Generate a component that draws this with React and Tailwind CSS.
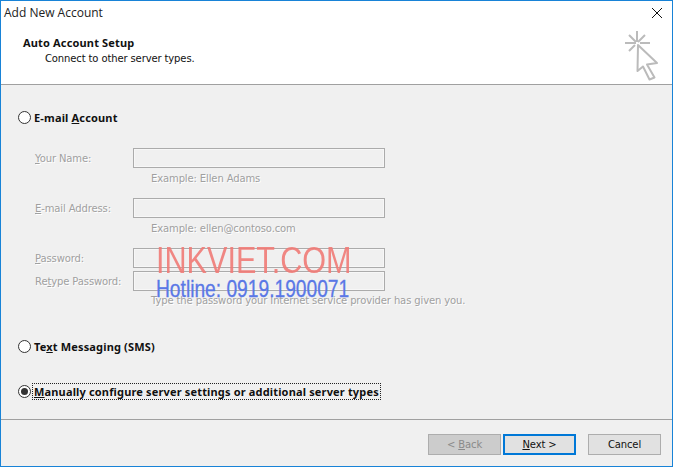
import React from 'react';

const Radio = ({ checked }) => (
  <span className="flex h-[13px] w-[13px] shrink-0 items-center justify-center rounded-full border border-[#333] bg-white">
    {checked && <span className="h-[7px] w-[7px] rounded-full bg-[#333]" />}
  </span>
);

const RadioRow = ({ checked, focused, children }) => (
  <div className="flex h-[15px] items-center pl-[17px]">
    <Radio checked={checked} />
    <span
      className={`ml-[2px] flex h-[15px] items-center pl-px pr-px text-[11px] font-bold leading-none tracking-[0.16px] text-[#111] [font-family:'Noto_Sans',sans-serif] ${
        focused ? 'outline-1 outline-dotted outline-[#222]' : ''
      }`}
    >
      {children}
    </span>
  </div>
);

const Disabled = ({ children, className = '' }) => (
  <span className={`text-[10px] leading-none tracking-[-0.12px] text-[#a0a0a0] [text-shadow:1px_1px_0_#fff] ${className}`}>{children}</span>
);

const Field = ({ label, className = '' }) => (
  <div className={`flex h-5 items-center ${className}`}>
    <Disabled className="mt-[2px] w-[98px] shrink-0">{label}</Disabled>
    <div className="h-5 w-[252px] border border-[#ababab] bg-[#f0f0f0] shadow-[inset_0_0_0_1px_#f7f7f7]" />
  </div>
);

const Hint = ({ children, className = '' }) => (
  <div className={`flex h-[14px] items-center pl-[116px] pt-[2px] ${className}`}>
    <Disabled className="whitespace-nowrap">{children}</Disabled>
  </div>
);

const Button = ({ children, variant }) => {
  const styles = {
    disabled: 'border border-[#adadad] bg-[#cccccc] text-[#8a8a8a]',
    primary: 'border-2 border-[#0078d7] bg-[#e1e1e1] text-[#111]',
    normal: 'border border-[#adadad] bg-[#e1e1e1] text-[#111]',
  };
  return (
    <div className={`flex h-[21px] w-[73px] items-center justify-center text-[10px] leading-none tracking-[-0.12px] ${styles[variant]}`}>
      <span>{children}</span>
    </div>
  );
};

const CursorIcon = () => (
  <svg width="40" height="54" viewBox="0 0 40 54" fill="none" stroke="#bbbbbb" strokeWidth="2" className="mt-[1px]">
    <path d="M15 3v11M3 15h11M7 7l7 7M23 7l-7 7M7 23l6-6M18 15h10" />
    <path d="M16 17l19 18-10 1.500 7.500 13-5 2-6.500-13-5.500 4.500z" strokeLinejoin="round" />
  </svg>
);

const App = () => {
  return (
    <div className="relative flex h-[467px] w-[673px] flex-col overflow-hidden border border-[#1883d7] bg-[#f0f0f0] [font-family:'DejaVu_Sans',sans-serif]">
      <div className="h-[84px] shrink-0 border-b border-[#a0a0a0] bg-white">
        <div className="flex h-[26px] items-center justify-between pb-[2px] pl-[3px] pr-[10px]">
          <span className="text-[12px] leading-none text-[#222] [font-family:'Open_Sans',sans-serif]">Add New Account</span>
          <svg width="10" height="10" viewBox="0 0 10 10" stroke="#111" strokeWidth="1">
            <path d="M0 0l10 10M10 0L0 10" />
          </svg>
        </div>
        <div className="flex justify-between pl-[22px] pr-[10px]">
          <div className="pt-[9px]">
            <div className="text-[11px] font-bold leading-[14px] tracking-[0.16px] text-[#111] [font-family:'Noto_Sans',sans-serif]">Auto Account Setup</div>
            <div className="mt-[2px] pl-[22px] text-[10px] leading-[14px] tracking-[-0.12px] text-[#111]">Connect to other server types.</div>
          </div>
          <CursorIcon />
        </div>
      </div>

      <div className="flex-1">
        <div className="pt-[25px]">
          <RadioRow>
            <span>E-mail <u>A</u>ccount</span>
          </RadioRow>
        </div>
        <div className="pl-[34px] pt-[23px]">
          <Field label={<><u>Y</u>our Name:</>} />
          <Hint className="mt-[3px]">Example: Ellen Adams</Hint>
          <Field className="mt-[13px]" label={<><u>E</u>-mail Address:</>} />
          <Hint className="mt-[3px]">Example: ellen@contoso.com</Hint>
          <Field className="mt-[13px]" label={<><u>P</u>assword:</>} />
          <Field className="mt-[3px]" label={<>Re<u>t</u>ype Password:</>} />
          <Hint className="mt-[2px]">Type the password your Internet service provider has given you.</Hint>
        </div>
        <div className="pt-[32px]">
          <RadioRow>
            <span>Te<u>x</u>t Messaging (SMS)</span>
          </RadioRow>
        </div>
        <div className="pt-[30px]">
          <RadioRow checked focused>
            <span><u>M</u>anually configure server settings or additional server types</span>
          </RadioRow>
        </div>
      </div>

      <div className="h-[47px] shrink-0 border-t border-[#a0a0a0] pt-[14px]">
        <div className="flex justify-end pr-[11px]">
          <Button variant="disabled">&lt; <u>B</u>ack</Button>
          <div className="ml-[2px]">
            <Button variant="primary"><u>N</u>ext &gt;</Button>
          </div>
          <div className="ml-[12px]">
            <Button variant="normal">Cancel</Button>
          </div>
        </div>
      </div>

      {/* watermark over the form */}
      <div className="absolute left-[155px] top-[243px] flex flex-col items-start [font-family:'Liberation_Sans',sans-serif]">
        <div className="origin-left scale-x-[0.85] whitespace-nowrap text-[36px] leading-[34px] text-[#f07a75]/90">INKVIET.COM</div>
        <div className="origin-left -translate-y-px scale-x-[0.8] whitespace-nowrap text-[24px] leading-[24px] text-[#5a78e6] [-webkit-text-stroke:0.3px_#5a78e6]">Hotline: 0919.1900071</div>
      </div>
    </div>
  );
};

export default App;
